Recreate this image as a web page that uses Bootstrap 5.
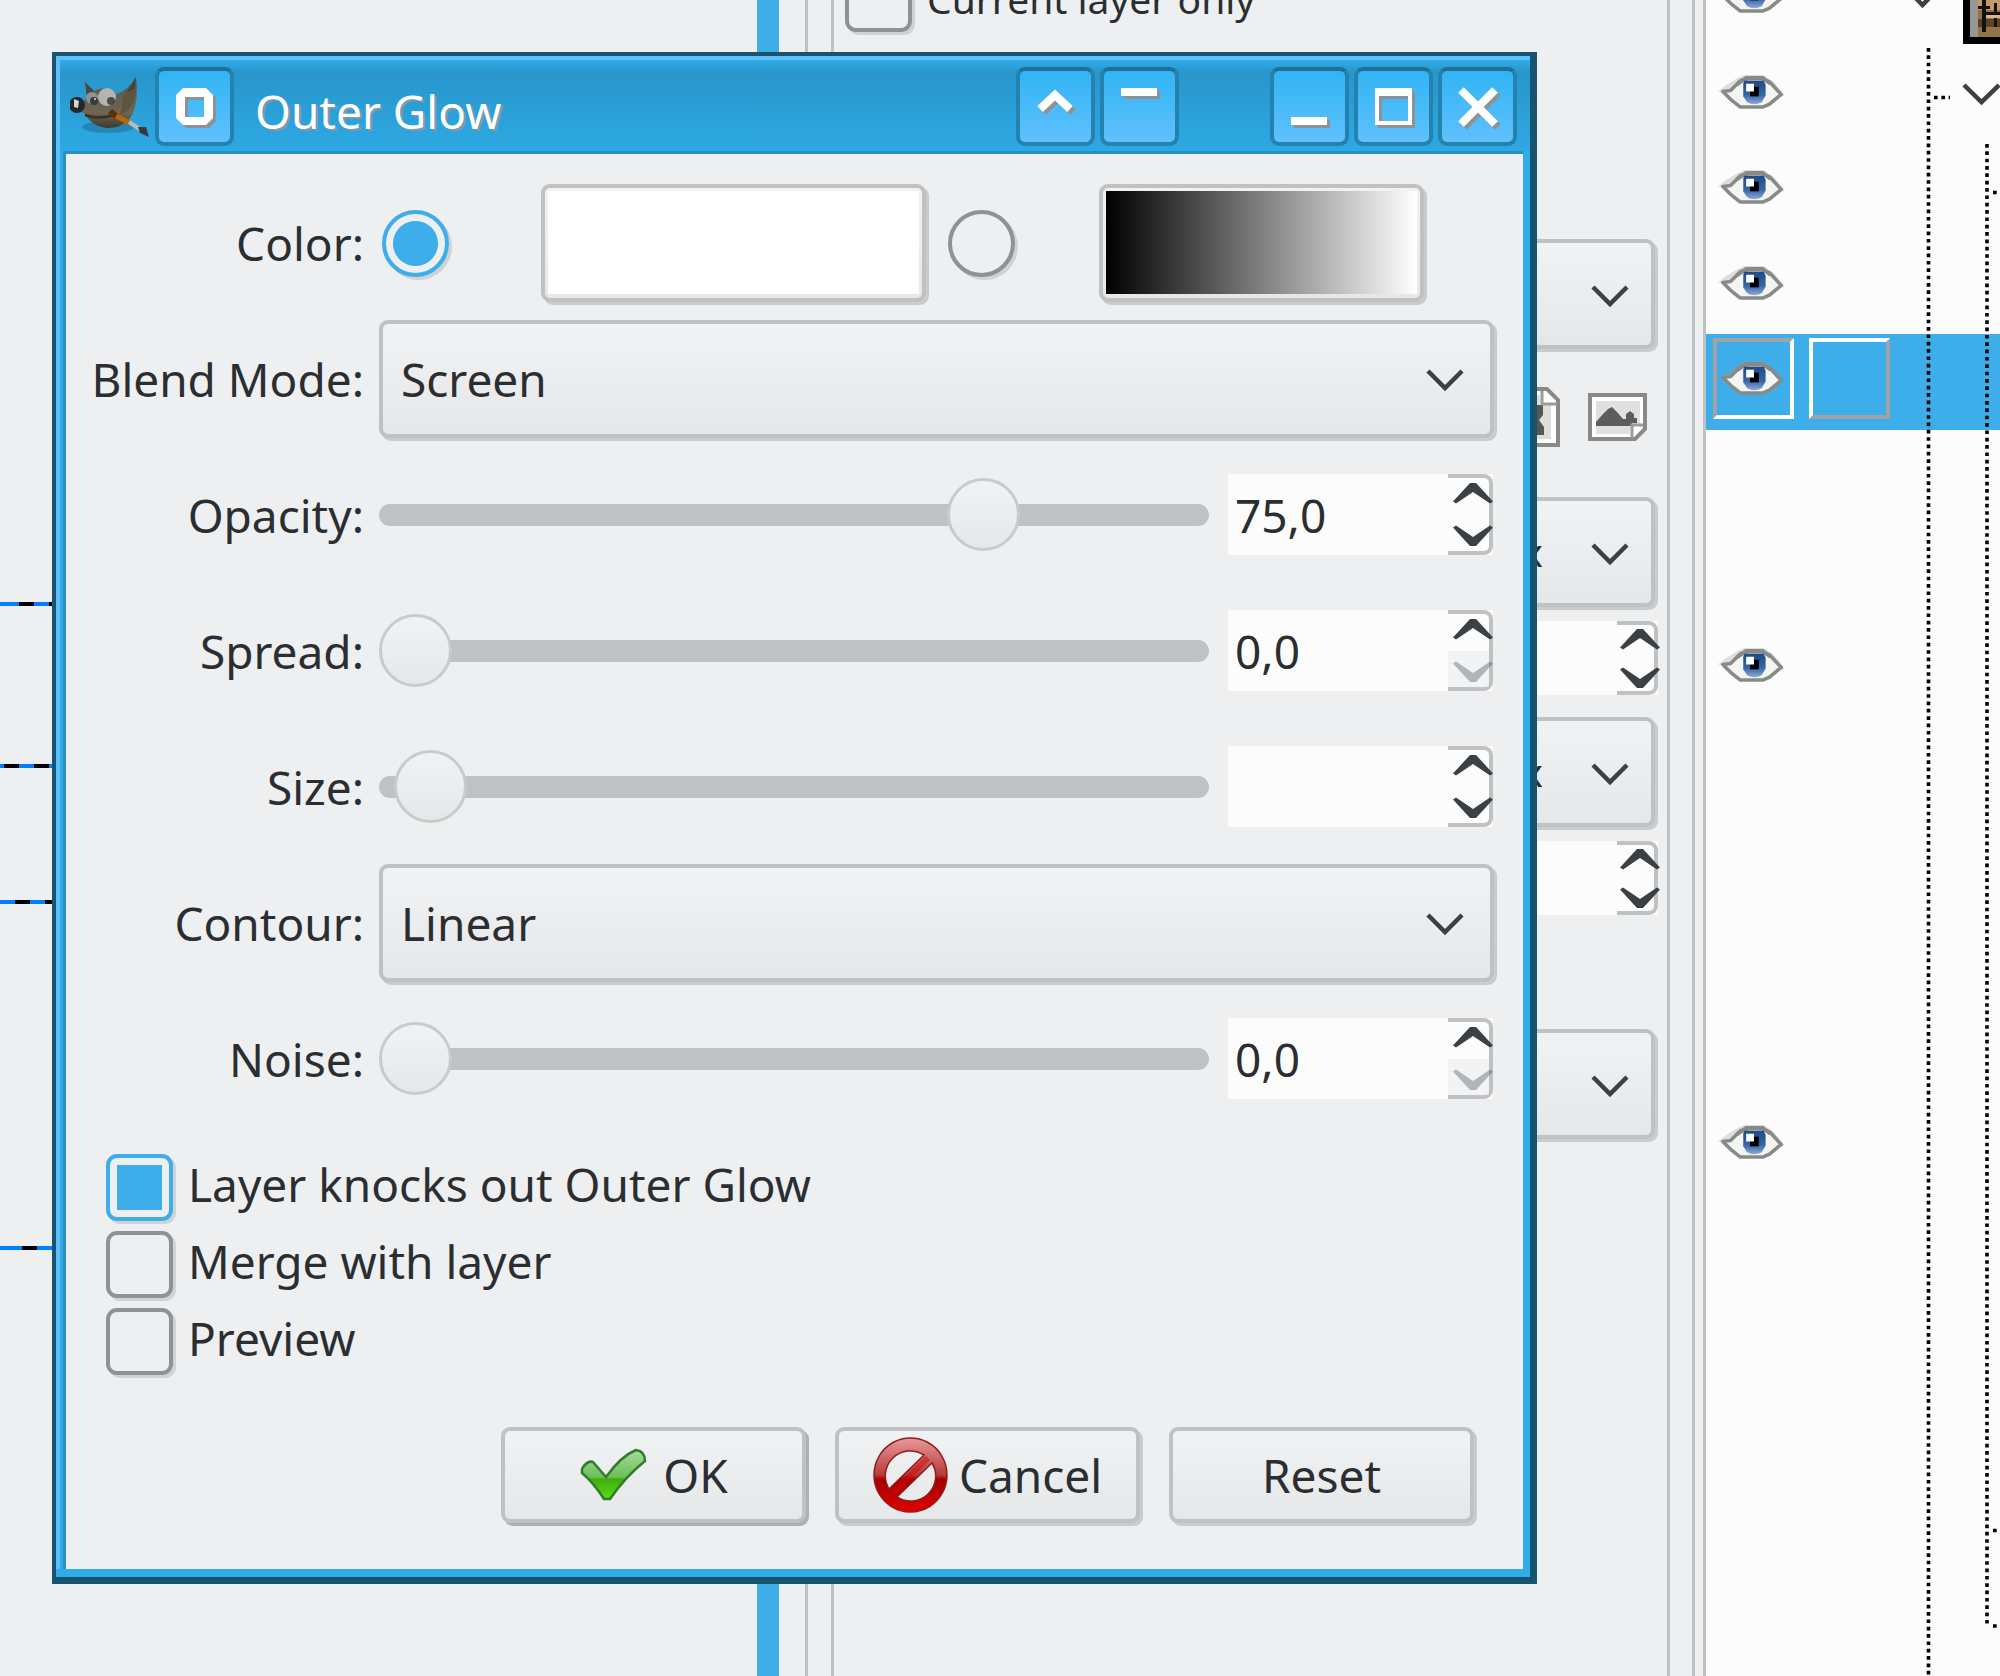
<!DOCTYPE html>
<html lang="en">
<head>
<meta charset="utf-8">
<meta name="viewport" content="width=device-width, initial-scale=1">
<title>Outer Glow</title>
<link href="https://cdn.jsdelivr.net/npm/bootstrap@5.3.0/dist/css/bootstrap.min.css" rel="stylesheet">
<style>
:root{--ink:#2b2e31;--line:#bfc1c3;--soft:#c9cbcd;--face:#eeeff1;--accent:#3daee9}
body{font-family:"Noto Sans","Open Sans",sans-serif;font-size:46px;line-height:60px;color:var(--ink);background:var(--face)}
.desk{height:100vh}
/* image canvas on the left */
.canvas-area{flex:0 0 757px}
.guide{position:absolute;left:0;right:0;height:4px;background:repeating-linear-gradient(90deg,#0080ff 0 15px,#000 15px 30px)}
.strip{flex:0 0 22px;background:var(--accent)}
.splitter{flex:0 0 26px}
.edge{flex:0 0 3px;background:var(--line)}
/* tool options */
.options{flex:1 1 0;min-width:0;margin-top:-35px;padding:0 9px 0 11px}
.options .check-line{font-size:39px;gap:15px;margin-bottom:207px}
.options .check-line label{padding:0}
.options .spin{height:74px;width:100%;margin-bottom:22px}
.options .steps{flex-basis:41px}
.paper-icons{gap:28px;padding-right:11px;height:60px;margin:38px 0 50px}
/* shared raised controls */
.raised{border:4px solid var(--line);border-radius:9px;box-shadow:3px 3px 0 var(--soft);background-color:#ecedef;background-image:linear-gradient(#f1f2f4,#e6e7e8)}
.combo{--bs-form-select-bg-img:none;width:calc(100% - 3px);height:118px;margin:0 3px 3px 0;padding:0 100px 0 18px;color:var(--ink);font-size:inherit;line-height:60px;
 background-image:url("data:image/svg+xml,%3Csvg xmlns='http://www.w3.org/2000/svg' viewBox='0 0 40 26'%3E%3Cpath d='M3 3 20 20 37 3' fill='none' stroke='%233b4045' stroke-width='4.5'/%3E%3C/svg%3E"),linear-gradient(#f1f2f4,#e6e7e8);
 background-size:40px 26px,100% 100%;background-position:right 25px top 44px,0 0;background-repeat:no-repeat}
.options .combo{height:110px;padding-right:108px;font-size:39px;text-align-last:right;background-position:right 21px top 41px,0 0}
.combo:focus{border-color:var(--accent)}
.tick{appearance:none;flex:none;width:67px;height:67px;margin:0;border:4px solid #8f9294;border-radius:11px;background:var(--face);box-shadow:3px 3px 0 #d0d2d4}
.tick[type=radio]{border-radius:50%}
.tick:checked{border-color:var(--accent)}
.tick[type=checkbox]:checked{background:linear-gradient(var(--accent),var(--accent)) center/45px 45px no-repeat var(--face)}
.tick[type=radio]:checked{background:radial-gradient(circle,var(--accent) 22px,var(--face) 23px)}
.spin{width:265px;height:81px;background:#fcfcfc}
.spin input{flex:1 1 0;min-width:0;border:0;padding:0 0 0 7px;background:transparent;color:var(--ink);font-size:inherit;outline:0}
.steps{flex:0 0 45px;border:4px solid var(--line);border-left:0;border-radius:0 9px 9px 0}
.steps button{flex:1 1 0;border:0;padding:0 0 6px;background:transparent;line-height:0}
.steps button:last-child{padding:6px 0 0}
.steps button:disabled{background:#eff0f1;opacity:.7}
.steps button:disabled svg{opacity:.5}
.steps svg{width:44px;height:24px;margin-right:-9px;overflow:visible}
/* dialog window */
.win{position:absolute;top:52px;left:2.6vw;width:74.25vw;border:solid #185370;border-width:4px 7px 7px 4px;background:#30ade9}
.win-in{border:solid #5fc1fc;border-width:4px 0 0 4px}
.titlebar{height:91px;padding:7px 13px 5px 10px;background:linear-gradient(#30ade9 0,#2896cb 12px,#2ea9e3 100%)}
.wbtn{width:79px;height:79px;padding:0;border:4px solid #2382ae;border-top-color:#1f6f96;border-radius:9px;background:linear-gradient(#31b4f5,#5fc1fc);line-height:0}
.wbtn svg{width:71px;height:71px;filter:drop-shadow(3px 3px 0 #8f9294)}
.win-title{margin:0 0 0 21px;padding-top:8px;font-size:46px;font-weight:400;line-height:60px;color:#fff;text-shadow:2px 2px 0 #7f99a6}
.win-body{margin:0 7px 8px 3px;padding:30px 26px 46px 0;border:solid #2890c0;border-width:3px 0 0 3px;background:var(--face)}
.form-grid{display:grid;grid-template-columns:298px 1fr;column-gap:15px;row-gap:15px;grid-auto-rows:121px;align-items:center}
.form-grid>label,.form-grid>.cap{padding-bottom:4px;text-align:right;white-space:nowrap}
.swatch{height:118px;margin-bottom:3px;padding:3px}
.swatch span{display:block;height:103px;margin-bottom:4px}
.sw-color{width:385px}.sw-color span{background:#fff}
.sw-grad{width:325px}.sw-grad span{background:linear-gradient(90deg,#000,#fff)}
.slide-row{gap:19px;padding:0 4px 4px 0}
.slide{appearance:none;flex:1 1 0;min-width:0;height:73px;margin:0;background:transparent}
.slide::-webkit-slider-runnable-track{height:22px;border-radius:11px;background:var(--line)}
.slide::-webkit-slider-thumb{appearance:none;width:73px;height:73px;margin-top:-26px;border:3px solid #c8cacb;border-radius:50%;background:linear-gradient(#f1f2f4,#e6e7e8)}
.checks{margin:33px 0 52px 40px;gap:10px}
.check-line{height:67px;gap:15px}
.check-line label{padding-bottom:8px}
.act{width:305px;height:96px;padding:0;font-size:inherit;line-height:60px;color:var(--ink)}
.act.first{box-shadow:3px 3px 0 #aeb0b2}
.actions{gap:29px;margin-right:23px}
/* layers */
.layers{flex:0 0 294px;background:#fcfcfc}
.rows{height:1719px;margin-top:-48px}
.lrow{flex:1 1 0;padding:4px 0 10px 7px;gap:15px}
.lrow.on{background:var(--accent)}
.cell{width:81px;height:81px;padding-bottom:2px;border:4px solid transparent}
.cell svg{width:70px;height:37px}
.on .cell{border-color:#a0a4a7 #fff #fff #a0a4a7}
.on .cell.off{border-color:#fff #a0a4a7 #a0a4a7 #fff}
.tree{position:absolute;top:0;right:0;width:110px;height:1676px}
</style>
<script src="https://cdn.jsdelivr.net/npm/bootstrap@5.3.0/dist/js/bootstrap.bundle.min.js"></script>
</head>
<body class="overflow-hidden">
<svg class="position-absolute" width="0" height="0" aria-hidden="true">
 <defs>
  <linearGradient id="irisFill" x1="0" y1="0" x2="0" y2="1"><stop offset="0" stop-color="#204a87"/><stop offset=".6" stop-color="#3465a4"/><stop offset="1" stop-color="#8fa9d6"/></linearGradient>
  <symbol id="eye" viewBox="0 0 72 38">
   <path d="M1 19Q9 12 20 6L28 2H48L58 9L70 23L55 28Z" fill="#999" opacity=".3"/>
   <path d="M6 19L14 18L24 8L32 6H46L54 9L66 22L54 32L47 35H24L14 27Z" fill="#f4f4f3" stroke="#888a85" stroke-width="3.6" stroke-linejoin="round"/>
   <path d="M20 12 30 5H47L55 11" fill="none" stroke="#888a85" stroke-width="4"/>
   <path d="M28 8H48L50 12V23L46 30Q38 34 31 30L27 24V11Z" fill="url(#irisFill)"/>
   <path d="M34 14H43V24H34Z" fill="#000"/><path d="M30 11H38V19H30Z" fill="#fff"/>
  </symbol>
  <symbol id="up" viewBox="0 0 44 24"><path d="M2 20.500 19 2H25L42 20.500 39 22.500 22 11 5 22.500Z" fill="#3b4045"/></symbol>
  <symbol id="down" viewBox="0 0 44 24"><path d="M2 3.500 19 22H25L42 3.500 39 1.500 22 13 5 1.500Z" fill="#3b4045"/></symbol>
 </defs>
</svg>

<main class="desk d-flex position-relative overflow-hidden">
 <section class="canvas-area position-relative">
  <div class="guide" style="top:602px;background-position-x:4px"></div>
  <div class="guide" style="top:764px;background-position-x:-11px"></div>
  <div class="guide" style="top:900px"></div>
  <div class="guide" style="top:1246px;background-position-x:7px"></div>
 </section>
 <div class="strip"></div>
 <div class="splitter"></div><div class="edge"></div>
 <div class="splitter" style="flex-basis:23px"></div><div class="edge"></div>

 <section class="options">
  <div class="check-line d-flex align-items-center">
   <input class="tick" type="checkbox" id="curLayer"><label for="curLayer" class="text-nowrap">Current layer only</label>
  </div>
  <select class="combo form-select raised" aria-label="Source"><option></option></select>
  <div class="paper-icons d-flex justify-content-end align-items-center">
   <svg width="47" height="60" viewBox="0 0 47 60"><path d="M2 2H34L45 13V58H2Z" fill="#fff" stroke="#888a85" stroke-width="4"/><path d="M8 8H27V18H38V52H8Z" fill="#ddd"/><path d="M8 18H30V28L26 33L31 40V48H8Z" fill="#555753"/><path d="M29 4V17H44" fill="none" stroke="#9a9c98" stroke-width="3"/></svg>
   <svg width="59" height="48" viewBox="0 0 59 48"><path d="M2 2H57V36L47 46H2Z" fill="#fff" stroke="#888a85" stroke-width="4"/><path d="M8 8H52V32H42V41H8Z" fill="#e0e0e0"/><path d="M8 32V29L15 21L20 16L24 14L29 19L35 26H38V21L42 18L46 21V25H49V30H44V33H8Z" fill="#5c5e5b"/><path d="M44 45V32H55" fill="none" stroke="#9a9c98" stroke-width="3"/></svg>
  </div>
  <div>
   <select class="combo form-select raised" aria-label="Width unit" style="margin-bottom:14px"><option>px</option></select>
   <div class="spin d-flex"><input type="text" aria-label="Width"><div class="steps d-flex flex-column"><button type="button" aria-label="Increase width"><svg><use href="#up"/></svg></button><button type="button" aria-label="Decrease width"><svg><use href="#down"/></svg></button></div></div>
   <select class="combo form-select raised" aria-label="Height unit" style="margin-bottom:14px"><option>px</option></select>
   <div class="spin d-flex" style="margin-bottom:114px"><input type="text" aria-label="Height"><div class="steps d-flex flex-column"><button type="button" aria-label="Increase height"><svg><use href="#up"/></svg></button><button type="button" aria-label="Decrease height"><svg><use href="#down"/></svg></button></div></div>
   <select class="combo form-select raised" aria-label="Preset"><option></option></select>
  </div>
 </section>
 <div class="edge"></div><div style="flex:0 0 22px"></div><div class="edge"></div><div style="flex:0 0 8px"></div><div class="edge"></div>

 <section class="layers position-relative">
  <div class="rows d-flex flex-column">
   <div class="lrow d-flex"><span class="cell d-flex align-items-center"><svg><use href="#eye"/></svg></span></div>
   <div class="lrow d-flex"><span class="cell d-flex align-items-center"><svg><use href="#eye"/></svg></span></div>
   <div class="lrow d-flex"><span class="cell d-flex align-items-center"><svg><use href="#eye"/></svg></span></div>
   <div class="lrow d-flex"><span class="cell d-flex align-items-center"><svg><use href="#eye"/></svg></span></div>
   <div class="lrow on d-flex"><span class="cell d-flex align-items-center"><svg><use href="#eye"/></svg></span><span class="cell off"></span></div>
   <div class="lrow"></div><div class="lrow"></div>
   <div class="lrow d-flex"><span class="cell d-flex align-items-center"><svg><use href="#eye"/></svg></span></div>
   <div class="lrow"></div><div class="lrow"></div><div class="lrow"></div><div class="lrow"></div>
   <div class="lrow d-flex"><span class="cell d-flex align-items-center"><svg><use href="#eye"/></svg></span></div>
   <div class="lrow"></div><div class="lrow"></div><div class="lrow"></div><div class="lrow"></div><div class="lrow"></div>
  </div>
  <svg class="tree" viewBox="1890 0 110 1676" aria-hidden="true">
   <g stroke="#000" stroke-width="3.600" stroke-dasharray="3.670 3.673"><path d="M1928.500 48V1676M1987 144V1627M1934 97.500H1950M1993 192.500H1998M1993 1530.500H1998M1993 1626H1998"/></g>
   <path d="M1964 85 1981.500 102 1999 85M1905-13 1922.500 5 1940-13" fill="none" stroke="#3b4045" stroke-width="4.500"/>
   <path d="M1963 0H2000V44H1963Z" fill="#000"/><path d="M1970 0H2000V37H1970Z" fill="#95734a"/><path d="M1970 0H1978V37H1970Z" fill="#999794"/>
   <path d="M1978 0H2000V10H1978Z" fill="#c39a6c"/><path d="M1978 19H2000V27H1978Z" fill="#5a452c"/><path d="M1982 0H1986V32H1982ZM1994 3H1997V27H1994ZM1986 12H2000V15H1986ZM1978 6H1990V9H1978Z" fill="#15110c"/><path d="M1986 15H2000V18H1986Z" fill="#d8b691"/>
  </svg>
 </section>

 <section class="win" role="dialog" aria-labelledby="dlgTitle">
  <div class="win-in">
   <header class="titlebar d-flex align-items-center">
    <svg width="80" height="60" viewBox="0 0 80 60" aria-hidden="true">
     <defs><linearGradient id="fur" x1="0" y1="0" x2="0" y2="1"><stop offset="0" stop-color="#55534b"/><stop offset=".7" stop-color="#6f6652"/><stop offset="1" stop-color="#3d392f"/></linearGradient></defs>
     <ellipse cx="38" cy="50" rx="26" ry="6" fill="#17506e" opacity=".35"/>
     <path d="M15 5L24 14Q38 8 46 17Q58 14 66 0Q69 24 62 38Q54 51 38 51Q22 50 14 36L6 34Q14 28 17 18Z" fill="url(#fur)"/>
     <path d="M66 1Q62 14 52 19Q54 30 49 38Q62 34 65 20Z" fill="#5e553f"/><path d="M15 5L24 14L17 20Z" fill="#454a4a"/><path d="M66 0Q60 12 56 15L64 12Z" fill="#454038"/>
     <ellipse cx="22" cy="21" rx="6" ry="6" fill="#929391"/><ellipse cx="37" cy="20" rx="9" ry="9" fill="#b4b5b3"/>
     <circle cx="24" cy="24" r="4" fill="#3a3b3c"/><circle cx="41" cy="24" r="4" fill="#4a4b4c"/><circle cx="25" cy="22" r="1" fill="#ddd"/>
     <ellipse cx="7" cy="28" rx="8" ry="8" fill="#24282b"/><path d="M4 22L9 24L8 31L4 30Z" fill="#d5d8da"/>
     <path d="M15 38Q28 43 44 38" stroke="#35322a" stroke-width="2.500" fill="none"/>
     <path d="M40 34L47 40" stroke="#5a3305" stroke-width="6"/><path d="M46 39L60 46" stroke="#b9650c" stroke-width="5"/><path d="M59 45L71 53" stroke="#b9bbbb" stroke-width="4"/><path d="M68 50L76 50L79 60L70 56Z" fill="#333a40"/>
    </svg>
    <button type="button" class="wbtn" style="margin-left:5px" aria-label="On all desktops"><svg viewBox="0 0 71 71"><path d="M24 17H47L54 24V47L47 54H24L17 47V24Z M26 26V46H45V26Z" fill="#fff" fill-rule="evenodd"/></svg></button>
    <h1 class="win-title flex-grow-1" id="dlgTitle">Outer Glow</h1>
    <div class="d-flex" style="gap:5px">
     <button type="button" class="wbtn" aria-label="Keep above"><svg viewBox="0 0 71 71"><path d="M20 38 35 24 50 38" fill="none" stroke="#fff" stroke-width="8"/></svg></button>
     <button type="button" class="wbtn" style="margin-right:86px" aria-label="Keep below"><svg viewBox="0 0 71 71"><path d="M17 17H53V25H17Z" fill="#fff"/></svg></button>
     <button type="button" class="wbtn" aria-label="Minimize"><svg viewBox="0 0 71 71"><path d="M17 46H53V54H17Z" fill="#fff"/></svg></button>
     <button type="button" class="wbtn" aria-label="Maximize"><svg viewBox="0 0 71 71"><path d="M17 17H54V54H17Z M21 25V50H50V25Z" fill="#fff" fill-rule="evenodd"/></svg></button>
     <button type="button" class="wbtn" aria-label="Close"><svg viewBox="0 0 71 71"><path d="M19 19 53 53M53 19 19 53" stroke="#fff" stroke-width="8"/></svg></button>
    </div>
   </header>

   <form class="win-body">
    <div class="form-grid">
     <span class="cap">Color:</span>
     <div class="d-flex align-items-center">
      <input class="tick" type="radio" name="fill" id="fillSolid" checked aria-label="Solid color" style="margin:0 92px 3px 3px">
      <button type="button" class="swatch sw-color raised" aria-label="Glow color"><span></span></button>
      <input class="tick" type="radio" name="fill" id="fillGrad" aria-label="Gradient" style="margin:0 84px 3px 22px">
      <button type="button" class="swatch sw-grad raised" aria-label="Glow gradient"><span></span></button>
     </div>
     <label for="blend">Blend Mode:</label>
     <select class="combo form-select raised" id="blend"><option>Screen</option></select>
     <label for="opacity">Opacity:</label>
     <div class="d-flex align-items-center slide-row"><input class="slide" type="range" id="opacity" value="75"><div class="spin d-flex"><input type="text" value="75,0" aria-label="Opacity value"><div class="steps d-flex flex-column"><button type="button" aria-label="Increase opacity"><svg><use href="#up"/></svg></button><button type="button" aria-label="Decrease opacity"><svg><use href="#down"/></svg></button></div></div></div>
     <label for="spread">Spread:</label>
     <div class="d-flex align-items-center slide-row"><input class="slide" type="range" id="spread" value="0"><div class="spin d-flex"><input type="text" value="0,0" aria-label="Spread value"><div class="steps d-flex flex-column"><button type="button" aria-label="Increase spread"><svg><use href="#up"/></svg></button><button type="button" disabled aria-label="Decrease spread"><svg><use href="#down"/></svg></button></div></div></div>
     <label for="size">Size:</label>
     <div class="d-flex align-items-center slide-row"><input class="slide" type="range" id="size" max="250" value="5"><div class="spin d-flex"><input type="text" aria-label="Size value"><div class="steps d-flex flex-column"><button type="button" aria-label="Increase size"><svg><use href="#up"/></svg></button><button type="button" aria-label="Decrease size"><svg><use href="#down"/></svg></button></div></div></div>
     <label for="contour">Contour:</label>
     <select class="combo form-select raised" id="contour"><option>Linear</option></select>
     <label for="noise">Noise:</label>
     <div class="d-flex align-items-center slide-row"><input class="slide" type="range" id="noise" value="0"><div class="spin d-flex"><input type="text" value="0,0" aria-label="Noise value"><div class="steps d-flex flex-column"><button type="button" aria-label="Increase noise"><svg><use href="#up"/></svg></button><button type="button" disabled aria-label="Decrease noise"><svg><use href="#down"/></svg></button></div></div></div>
    </div>
    <div class="checks d-flex flex-column">
     <div class="check-line d-flex align-items-center"><input class="tick" type="checkbox" id="knock" checked><label for="knock">Layer knocks out Outer Glow</label></div>
     <div class="check-line d-flex align-items-center"><input class="tick" type="checkbox" id="merge"><label for="merge">Merge with layer</label></div>
     <div class="check-line d-flex align-items-center"><input class="tick" type="checkbox" id="preview"><label for="preview">Preview</label></div>
    </div>
    <div class="actions d-flex justify-content-end">
     <button type="submit" class="act first raised d-flex justify-content-center align-items-center"><svg class="me-3" width="68" height="54" viewBox="0 0 68 54" aria-hidden="true"><defs><linearGradient id="ok" x1="0" y1="0" x2="0" y2="1"><stop offset="0" stop-color="#a6dc9b"/><stop offset=".55" stop-color="#6dbf5a"/><stop offset=".6" stop-color="#3fae0c"/><stop offset="1" stop-color="#5bdc14"/></linearGradient></defs><path d="M3 21Q8 12 14 14L27 29Q42 8 57 2Q66 3 66 13Q46 29 31 51H25Q14 34 3 25Z" fill="url(#ok)" stroke="#2f7d2a" stroke-width="2.500"/></svg>OK</button>
     <button type="button" class="act raised d-flex justify-content-center align-items-center"><svg style="margin-right:11px" width="75" height="76" viewBox="0 0 75 76" aria-hidden="true"><defs><linearGradient id="no" x1="0" y1="0" x2="0" y2="1"><stop offset="0" stop-color="#e89a9a"/><stop offset=".5" stop-color="#b93a3a"/><stop offset=".56" stop-color="#a40000"/><stop offset="1" stop-color="#e00000"/></linearGradient></defs><path fill-rule="evenodd" d="M37.500 1A36.500 37 0 1 1 37.490 1ZM16 52L51 18A25 25 0 0 0 16 52ZM24 60L59 26A25 25 0 0 1 24 60Z" fill="url(#no)" stroke="#8e1d1d" stroke-width="1.500"/><path d="M19 56L55 21" stroke="#d40000" stroke-width="6" opacity=".45"/></svg>Cancel</button>
     <button type="reset" class="act raised">Reset</button>
    </div>
   </form>
  </div>
 </section>
</main>
</body>
</html>
